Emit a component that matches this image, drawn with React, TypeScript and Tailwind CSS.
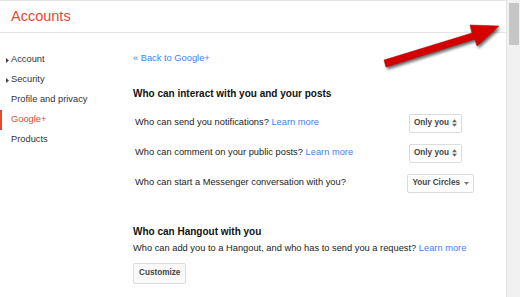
import React from 'react';

const sideItems = [
  { label: 'Account', caret: true },
  { label: 'Security', caret: true },
  { label: 'Profile and privacy', caret: false },
  { label: 'Google+', caret: false, active: true },
  { label: 'Products', caret: false },
];

const UpDown = () => (
  <svg width="5" height="8" viewBox="0 0 6 9" className="ml-[3px]">
    <path d="M0 3.5 L3 0 L6 3.5 Z M0 5.5 L3 9 L6 5.5 Z" fill="#666" />
  </svg>
);

const Row = ({ q, link, value, wide }: { q: string; link?: boolean; value: string; wide?: boolean }) => (
  <div className="flex items-center justify-between h-[30px]">
    <span>
      {q} {link && <span className="text-[#427fed]">Learn more</span>}
    </span>
    <div
      className={`flex items-center h-[19px] px-[4px] border border-[#dcdcdc] rounded-[2px] bg-white text-[8.2px] font-bold text-[#444] ${
        wide ? 'mr-[32px]' : 'mr-[44px]'
      }`}
    >
      {value}
      {wide ? (
        <svg width="5" height="3" viewBox="0 0 5 3" className="ml-[4px]">
          <path d="M0 0 L5 0 L2.5 3 Z" fill="#777" />
        </svg>
      ) : (
        <UpDown />
      )}
    </div>
  </div>
);

export default function App() {
  return (
    <div
      className="relative w-[520px] h-[297px] overflow-hidden bg-white flex text-[9.3px] text-[#222]"
      style={{ fontFamily: '"Liberation Sans", Arial, sans-serif' }}
    >
      <div className="flex-1 flex flex-col">
        <div className="h-[33px] border-t border-b border-[#e5e5e5] flex items-center pl-[11px]">
          <span className="text-[14.5px] text-[#dd4b39]">Accounts</span>
        </div>
        <div className="flex flex-1">
          <div className="w-[133px] pt-[17px]">
            {sideItems.map((it) => (
              <div key={it.label} className="relative h-[20px] flex items-center pl-[11px]">
                {it.active && <div className="absolute left-0 top-0 h-[20px] w-[2px] bg-[#dd4b39]" />}
                {it.caret && (
                  <svg width="3" height="5" viewBox="0 0 3 5" className="absolute left-[6px] top-[8px]">
                    <path d="M0 0 L3 2.5 L0 5 Z" fill="#444" />
                  </svg>
                )}
                <span className={it.active ? 'text-[#dd4b39]' : 'text-[#333]'}>{it.label}</span>
              </div>
            ))}
          </div>
          <div className="flex-1 pt-[18px]">
            <div className="h-[14px] leading-[14px] text-[#427fed]">« Back to Google+</div>
            <div className="mt-[22px] h-[14px] leading-[14px] font-bold text-[10px] text-[#111]">
              Who can interact with you and your posts
            </div>
            <div className="mt-[7px] pl-[2px]">
              <Row q="Who can send you notifications?" link value="Only you" />
              <Row q="Who can comment on your public posts?" link value="Only you" />
              <Row q="Who can start a Messenger conversation with you?" value="Your Circles" wide />
            </div>
            <div className="mt-[27px] h-[14px] leading-[14px] font-bold text-[10px] text-[#111]">
              Who can Hangout with you
            </div>
            <div className="mt-[2px] h-[14px] leading-[14px] whitespace-nowrap">
              Who can add you to a Hangout, and who has to send you a request?{' '}
              <span className="text-[#427fed]">Learn more</span>
            </div>
            <button className="mt-[8px] h-[21px] px-[5px] border border-[#dcdcdc] rounded-[2px] bg-[#fafafa] text-[8.2px] font-bold text-[#444]">
              Customize
            </button>
          </div>
        </div>
      </div>
      <div className="w-[14px] h-full bg-[#f1f1f1] border-l border-[#e3e3e3] pt-[3px] flex justify-center">
        <div className="w-[10px] h-[42px] bg-[#c6c6c6]" />
      </div>
      <svg className="absolute left-0 top-0 pointer-events-none" width="520" height="297" viewBox="0 0 520 297">
        <defs>
          <filter id="sh" x="-20%" y="-50%" width="140%" height="200%">
            <feGaussianBlur stdDeviation="1.5" />
          </filter>
        </defs>
        <g transform="translate(1.5 2.5)" filter="url(#sh)" opacity="0.6">
          <polygon points="384,60 472,33 470,25 499,26 477,46 475,39 386,67" fill="#000" />
        </g>
        <polygon points="384,60 472,33 470,25 499,26 477,46 475,39 386,67" fill="#d40000" stroke="#b00000" strokeWidth="0.5" strokeLinejoin="round" />
      </svg>
    </div>
  );
}
